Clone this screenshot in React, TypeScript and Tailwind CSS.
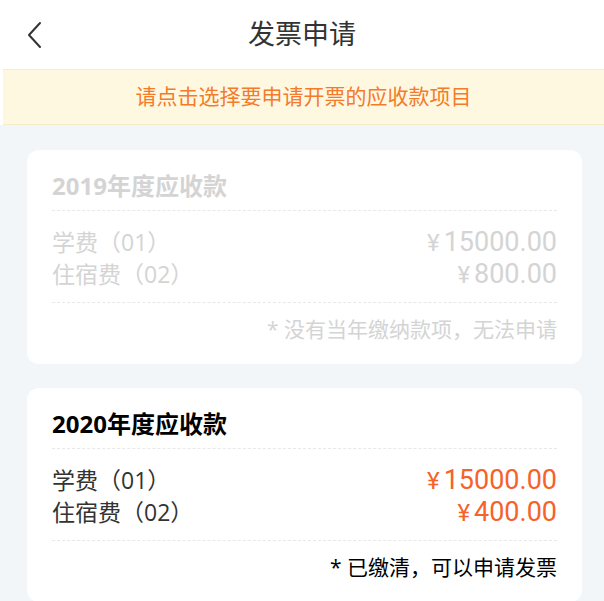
const FONT = "font-['Open_Sans','Noto_Sans_CJK_SC',sans-serif]";

type Item = { name: string; amount: string };

type Bill = {
  year: string;
  items: Item[];
  note: string;
  disabled: boolean;
};

const bills: Bill[] = [
  {
    year: "2019年度应收款",
    items: [
      { name: "学费（01）", amount: "15000.00" },
      { name: "住宿费（02）", amount: "800.00" },
    ],
    note: "* 没有当年缴纳款项，无法申请",
    disabled: true,
  },
  {
    year: "2020年度应收款",
    items: [
      { name: "学费（01）", amount: "15000.00" },
      { name: "住宿费（02）", amount: "400.00" },
    ],
    note: "* 已缴清，可以申请发票",
    disabled: false,
  },
];

function BillCard({ bill }: { bill: Bill }) {
  const off = bill.disabled;
  return (
    <div className="rounded-xl bg-white px-[25px] pt-[20px] pb-[20px]">
      <div
        className={`h-[32px] text-[24px] font-bold leading-[32px] ${
          off ? "text-[#d4d4d4]" : "text-black"
        }`}
      >
        {bill.year}
      </div>
      <div className="mt-[8px] border-t border-dashed border-[#e8e8e8] pt-[15px] pb-[12px]">
        {bill.items.map((item) => (
          <div key={item.name} className="flex h-[32px] items-center justify-between">
            <span className={`text-[23px] leading-[32px] ${off ? "text-[#d4d4d4]" : "text-[#333]"}`}>
              {item.name}
            </span>
            <span
              className={`font-['Roboto',sans-serif] text-[27px] leading-[32px] ${
                off ? "text-[#d4d4d4]" : "text-[#f5622a]"
              }`}
            >
              <span className="mr-[4px] text-[24px]">¥</span>
              {item.amount}
            </span>
          </div>
        ))}
      </div>
      <div
        className={`border-t border-dashed border-[#e8e8e8] pt-[12px] text-right text-[21px] leading-[29px] ${
          off ? "text-[#d4d4d4]" : "text-black"
        }`}
      >
        {bill.note}
      </div>
    </div>
  );
}

export default function App() {
  return (
    <div className={`${FONT} min-h-[601px] w-[604px] bg-[#f3f6f9]`}>
      <div className="relative flex h-[69px] items-center justify-center bg-white">
        <button type="button" className="absolute left-[24px] top-[20px]">
          <svg width="22" height="30" viewBox="0 0 22 30" fill="none">
            <path d="M16 3 L5 15 L16 27" stroke="#333" strokeWidth="2" strokeLinecap="round" strokeLinejoin="round" />
          </svg>
        </button>
        <h1 className="text-[27px] text-[#333]">发票申请</h1>
      </div>
      <div className="bg-white pl-[3px]">
        <div className="flex h-[56px] items-center justify-center border-y border-[#f8ecc8] bg-[#fef8e1] text-[21px] text-[#f47b2a]">
          请点击选择要申请开票的应收款项目
        </div>
      </div>
      <div className="flex flex-col gap-[24px] pt-[25px] pl-[27px] pr-[22px]">
        {bills.map((b) => (
          <BillCard key={b.year} bill={b} />
        ))}
      </div>
    </div>
  );
}
